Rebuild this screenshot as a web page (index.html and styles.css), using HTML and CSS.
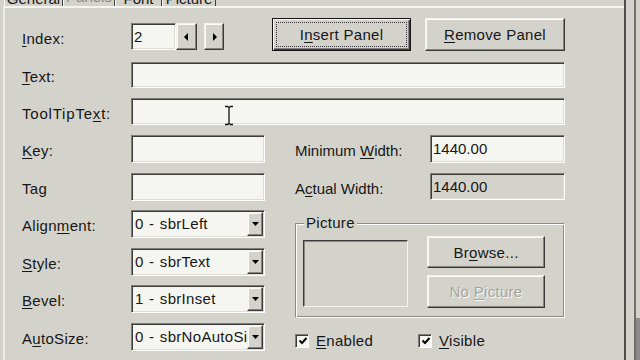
FILE: index.html
```html
<!DOCTYPE html>
<html>
<head>
<meta charset="utf-8">
<link rel="stylesheet" href="styles.css">
</head>
<body>
<div class="screen">
  <div class="dialog">
    <div class="tabs">
      <div class="tab t-general">General</div>
      <div class="tab t-panels selected">Panels</div>
      <div class="tab t-font">Font</div>
      <div class="tab t-picture">Picture</div>
    </div>
    <div class="page">
      <div class="row row-index">
        <div class="lbl"><u>I</u>ndex:</div>
        <div class="spin">
          <div class="field index-field">2</div>
          <div class="btn spin-btn"><svg width="5" height="8" viewBox="0 0 5 8"><path d="M4 0 L0 4 L4 8 Z" fill="#000"/></svg></div>
          <div class="btn spin-btn second"><svg width="5" height="8" viewBox="0 0 5 8"><path d="M1 0 L5 4 L1 8 Z" fill="#000"/></svg></div>
        </div>
        <div class="btn cmd default insert"><span>I<u>n</u>sert Panel</span></div>
        <div class="btn cmd remove"><span><u>R</u>emove Panel</span></div>
      </div>

      <div class="row row-text">
        <div class="lbl"><u>T</u>ext:</div>
        <div class="field wide"></div>
      </div>

      <div class="row row-tip">
        <div class="lbl">ToolTipTe<u>x</u>t:</div>
        <div class="field wide tip">
          <svg class="ibeam" width="10" height="21" viewBox="0 0 10 21"><path d="M1 1.5 H3.5 L5 2.5 L6.5 1.5 H9 M5 2.5 V18.5 M1 19.5 H3.5 L5 18.5 L6.5 19.5 H9" stroke="#111" stroke-width="1.3" fill="none"/></svg>
        </div>
      </div>

      <div class="lower">
        <div class="left-col">
          <div class="frow">
            <div class="lbl"><u>K</u>ey:</div>
            <div class="field short"></div>
          </div>
          <div class="frow">
            <div class="lbl">Ta<u>g</u></div>
            <div class="field short"></div>
          </div>
          <div class="frow">
            <div class="lbl">Align<u>m</u>ent:</div>
            <div class="field combo"><span class="ctext">0 - sbrLeft</span><span class="btn dd"><svg width="7" height="4" viewBox="0 0 7 4"><path d="M0 0 H7 L3.5 4 Z" fill="#000"/></svg></span></div>
          </div>
          <div class="frow">
            <div class="lbl"><u>S</u>tyle:</div>
            <div class="field combo"><span class="ctext">0 - sbrText</span><span class="btn dd"><svg width="7" height="4" viewBox="0 0 7 4"><path d="M0 0 H7 L3.5 4 Z" fill="#000"/></svg></span></div>
          </div>
          <div class="frow">
            <div class="lbl"><u>B</u>evel:</div>
            <div class="field combo"><span class="ctext">1 - sbrInset</span><span class="btn dd"><svg width="7" height="4" viewBox="0 0 7 4"><path d="M0 0 H7 L3.5 4 Z" fill="#000"/></svg></span></div>
          </div>
          <div class="frow">
            <div class="lbl">A<u>u</u>toSize:</div>
            <div class="field combo"><span class="ctext">0 - sbrNoAutoSize</span><span class="btn dd"><svg width="7" height="4" viewBox="0 0 7 4"><path d="M0 0 H7 L3.5 4 Z" fill="#000"/></svg></span></div>
          </div>
        </div>

        <div class="right-col">
          <div class="frow">
            <div class="rlbl">Minimum <u>W</u>idth:</div>
            <div class="field num">1440.00</div>
          </div>
          <div class="frow actual">
            <div class="rlbl">A<u>c</u>tual Width:</div>
            <div class="field num disabled">1440.00</div>
          </div>
          <div class="group">
            <div class="gtitle">Picture</div>
            <div class="gbody">
              <div class="picbox"></div>
              <div class="gbtns">
                <div class="btn cmd browse"><span>Br<u>o</u>wse...</span></div>
                <div class="btn cmd nopic"><span>No <u>P</u>icture</span></div>
              </div>
            </div>
          </div>
          <div class="checks">
            <div class="check">
              <span class="chk"><svg width="10" height="10" viewBox="0 0 10 10"><path d="M1.5 4.5 L4 7 L8.5 2" stroke="#000" stroke-width="2" fill="none"/></svg></span>
              <span><u>E</u>nabled</span>
            </div>
            <div class="check visible">
              <span class="chk"><svg width="10" height="10" viewBox="0 0 10 10"><path d="M1.5 4.5 L4 7 L8.5 2" stroke="#000" stroke-width="2" fill="none"/></svg></span>
              <span><u>V</u>isible</span>
            </div>
          </div>
        </div>
      </div>
    </div>
  </div>
  <div class="edge"></div>
  <div class="rest"></div>
</div>
</body>
</html>
```

FILE: styles.css
```css
* { box-sizing: border-box; }

body {
  margin: 0;
  width: 640px;
  height: 360px;
  overflow: hidden;
  background: #d4d3cb;
  font-family: "Liberation Sans", Arial, sans-serif;
  font-size: 15px;
  letter-spacing: 0.3px;
  color: #161616;
}

u { text-decoration: underline; text-underline-offset: 2px; }

.screen {
  display: flex;
  height: 360px;
}

.dialog {
  width: 626px;
  flex: none;
  border-right: 2px solid #4d4d4b;
  height: 360px;
}

.edge {
  width: 10px;
  flex: none;
  border-right: 2px solid #6e6e6a;
}

.rest {
  flex: 1;
  background: linear-gradient(to bottom, #d4d3cb 0, #d4d3cb 318px, #8c8c88 318px);
}

/* tabs */
.tabs {
  display: flex;
  align-items: flex-end;
  height: 6px;
  overflow: hidden;
  padding-left: 4px;
}

.tab {
  flex: none;
  height: 15px;
  line-height: 15px;
  text-align: center;
  letter-spacing: 0;
  border-left: 1px solid #fbfbf7;
  border-right: 1px solid #3e3e3c;
}

.tab.selected {
  height: 17px;
  padding-bottom: 2px;
  color: #8a8a86;
}

.t-general { width: 59px; }
.t-panels { width: 52px; }
.t-font { width: 47px; }
.t-picture { width: 54px; }

/* page */
.page {
  margin-left: 3px;
  border-top: 2px solid #f4f4f0;
  border-left: 2px solid #ecece7;
  padding-left: 17px;
  height: 354px;
}

.row {
  display: flex;
  align-items: flex-start;
}

.lbl {
  width: 109px;
  flex: none;
  padding-top: 2px;
  white-space: nowrap;
}

.rlbl {
  width: 135px;
  flex: none;
  padding-top: 2px;
  white-space: nowrap;
  letter-spacing: 0;
}

/* sunken field */
.field {
  flex: none;
  background: #f5f6f1;
  border: 1px solid;
  border-color: #7c7c78 #fdfdfb #fdfdfb #7c7c78;
  box-shadow: inset 1px 1px #3c3c3a, inset -1px -1px #dcdcd5;
  padding-left: 2px;
  white-space: nowrap;
  overflow: hidden;
}

/* raised button */
.btn {
  flex: none;
  background: #d4d3cb;
  border: 1px solid;
  border-color: #f2f2ee #3a3a38 #3a3a38 #f2f2ee;
  box-shadow: inset -1px -1px #85857f, inset 1px 1px #fbfbf8;
  display: flex;
  align-items: center;
  justify-content: center;
}

.cmd {
  white-space: nowrap;
}

.default {
  border: 1px solid #141414;
  box-shadow: inset 1px 1px #f7f7f3, inset -1px -1px #3a3a38, inset -2px -2px #85857f;
  outline: 1px dotted #333;
  outline-offset: -5px;
}

/* row: index */
.row-index {
  margin-top: 10px;
  height: 33px;
}

.row-index .lbl {
  margin-top: 5px;
  line-height: 27px;
}

.spin {
  display: flex;
  margin-top: 5px;
  height: 27px;
}

.index-field {
  width: 45px;
  height: 27px;
  line-height: 25px;
}

.spin-btn {
  width: 21px;
  height: 27px;
}

.spin-btn.second {
  width: 20px;
  margin-left: 7px;
}

.insert {
  margin-left: 48px;
  width: 139px;
  height: 33px;
}

.remove {
  margin-left: 14px;
  width: 140px;
  height: 33px;
}

/* text rows */
.row-text {
  margin-top: 11px;
  height: 26px;
}

.row-text .lbl { line-height: 26px; }

.wide {
  width: 434px;
  height: 26px;
}

.row-tip {
  margin-top: 10px;
  height: 27px;
}

.row-tip .lbl { line-height: 27px; letter-spacing: 0.8px; }
.row-tip .wide { height: 27px; }

.tip {
  position: relative;
  overflow: visible;
}

.ibeam {
  position: absolute;
  left: 92px;
  top: 6px;
}

/* lower section */
.lower {
  display: flex;
  margin-top: 10px;
  gap: 30px;
}

.left-col {
  width: 243px;
  flex: none;
  display: flex;
  flex-direction: column;
  gap: 9.5px;
}

.frow {
  display: flex;
  align-items: flex-start;
  height: 28px;
}

.frow .lbl,
.frow .rlbl {
  line-height: 28px;
}

.short {
  width: 134px;
  height: 28px;
}

.combo {
  width: 134px;
  height: 28px;
  display: flex;
  padding: 1px 1px 1px 0;
}

.ctext {
  flex: 1;
  min-width: 0;
  overflow: hidden;
  white-space: nowrap;
  line-height: 24px;
  padding-left: 3px;
  letter-spacing: 0.3px;
  word-spacing: 1px;
}

.dd {
  width: 16px;
  height: 24px;
}

.right-col {
  width: 270px;
  flex: none;
  display: flex;
  flex-direction: column;
}

.num {
  width: 135px;
  height: 28px;
  line-height: 26px;
  letter-spacing: 0;
}

.actual {
  margin-top: 10px;
  height: 27px;
}

.actual .rlbl { line-height: 27px; }

.actual .num {
  height: 27px;
  line-height: 25px;
}

.disabled {
  background: #d4d3cb;
}

/* group box */
.group {
  margin-top: 23px;
  height: 95px;
  border: 1px solid;
  border-color: #8a8a85 #fdfdfb #fdfdfb #8a8a85;
  box-shadow: inset 1px 1px #fdfdfb, inset -1px -1px #8a8a85;
  padding-left: 7px;
}

.gtitle {
  width: fit-content;
  margin-top: -10px;
  margin-left: 1px;
  height: 18px;
  line-height: 18px;
  padding: 0 2px;
  background: #d4d3cb;
}

.gbody {
  display: flex;
  margin-top: 4px;
}

.picbox {
  margin-top: 4px;
  width: 105px;
  height: 67px;
  border: 1px solid;
  border-color: #3c3c3a #f4f4f0 #f4f4f0 #3c3c3a;
  box-shadow: inset 1px 1px #8a8a85;
}

.gbtns {
  margin-left: 19px;
  display: flex;
  flex-direction: column;
  gap: 7px;
}

.browse {
  width: 118px;
  height: 32px;
}

.nopic {
  width: 118px;
  height: 33px;
  color: #a4a49e;
  text-shadow: 1px 1px #fbfbf8;
}

/* checkboxes */
.checks {
  margin-top: 15px;
  display: flex;
  height: 15px;
}

.check {
  display: flex;
  align-items: center;
  gap: 7px;
  line-height: 15px;
  width: 123px;
  flex: none;
}

.chk {
  width: 14px;
  height: 14px;
  flex: none;
  background: #f5f6f1;
  border: 1px solid;
  border-color: #7c7c78 #fdfdfb #fdfdfb #7c7c78;
  box-shadow: inset 1px 1px #3c3c3a;
  display: flex;
  align-items: center;
  justify-content: center;
  padding: 1px 0 0 1px;
}
```
